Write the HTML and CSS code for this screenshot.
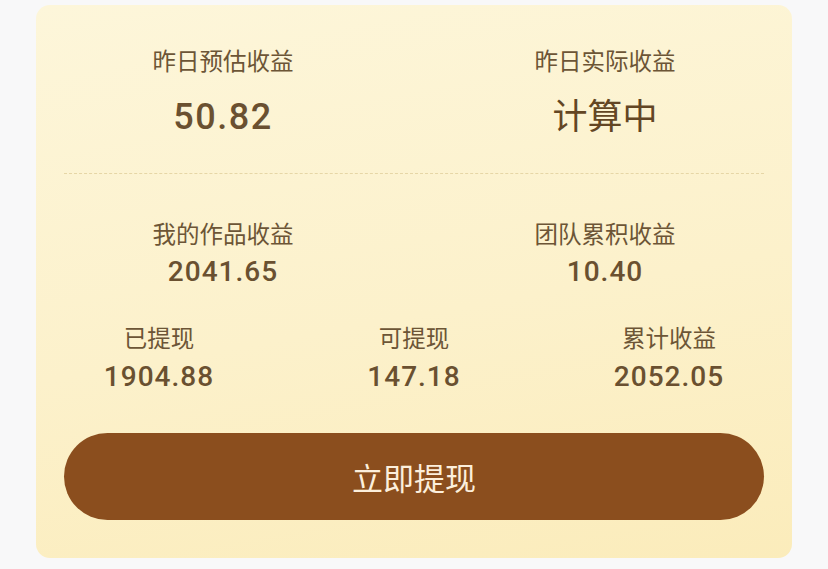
FILE: index.html
```html
<!DOCTYPE html>
<html lang="zh-CN">
<head>
<meta charset="utf-8">
<title>收益</title>
<link rel="stylesheet" href="styles.css">
</head>
<body>
<div class="card">
  <div class="row row-2 top">
    <div class="stat">
      <div class="label">昨日预估收益</div>
      <div class="big">50.82</div>
    </div>
    <div class="stat">
      <div class="label">昨日实际收益</div>
      <div class="big cjk">计算中</div>
    </div>
  </div>
  <div class="divider"></div>
  <div class="row row-2 mid">
    <div class="stat">
      <div class="label">我的作品收益</div>
      <div class="val">2041.65</div>
    </div>
    <div class="stat">
      <div class="label">团队累积收益</div>
      <div class="val">10.40</div>
    </div>
  </div>
  <div class="row row-3 mid">
    <div class="stat">
      <div class="label">已提现</div>
      <div class="val">1904.88</div>
    </div>
    <div class="stat">
      <div class="label">可提现</div>
      <div class="val">147.18</div>
    </div>
    <div class="stat">
      <div class="label">累计收益</div>
      <div class="val">2052.05</div>
    </div>
  </div>
  <button class="btn" type="button">立即提现</button>
</div>
</body>
</html>
```

FILE: styles.css
```css
* { box-sizing: border-box; }
html, body {
  margin: 0;
  padding: 0;
  background: #f8f8f9;
}
body {
  font-family: "Noto Sans CJK SC", "Noto Sans", sans-serif;
  width: 828px;
  height: 569px;
  overflow: hidden;
  padding-top: 5px;
}
.card {
  margin: 0 36px;
  width: 756px;
  height: 553px;
  border-radius: 14px;
  background: linear-gradient(170deg, #fdf6da 0%, #fcf1cb 55%, #fbecbb 100%);
  padding: 40px 0 38px;
  display: flex;
  flex-direction: column;
}
.row { display: grid; }
.row-2 { grid-template-columns: 1fr 1fr; column-gap: 8px; }
.row-3 { grid-template-columns: 1fr 1fr 1fr; column-gap: 9px; }
.stat {
  display: flex;
  flex-direction: column;
  align-items: center;
}
.label {
  font-size: 23.5px;
  line-height: 30px;
  color: #6c5536;
}
.big {
  margin-top: 22px;
  font-family: "Roboto", "Liberation Sans", sans-serif;
  font-weight: 500;
  font-size: 36px;
  letter-spacing: 1.5px;
  line-height: 40px;
  color: #6a5030;
}
.big.cjk {
  margin-top: 19px;
  font-family: "Noto Sans CJK SC", sans-serif;
  font-weight: 400;
  font-size: 35px;
  letter-spacing: 0;
  color: #634624;
}
.val {
  margin-top: 7px;
  font-family: "Roboto", "Liberation Sans", sans-serif;
  font-weight: 500;
  font-size: 28px;
  letter-spacing: 1px;
  line-height: 34px;
  color: #6a5030;
}
.row-3 .val { margin-top: 8px; }
.divider {
  margin: 36px 28px 0;
  border-top: 1px dashed #e6d6a6;
}
.row.mid { margin-top: 44px; }
.row-3.mid { margin-top: 33px; }
.btn {
  margin: 39px 28px 0;
  height: 87px;
  border: none;
  border-radius: 44px;
  background: #8b4e1e;
  color: #fcefdc;
  font-family: "Noto Sans CJK SC", sans-serif;
  font-size: 31px;
  font-weight: 400;
  padding: 0;
}
```
